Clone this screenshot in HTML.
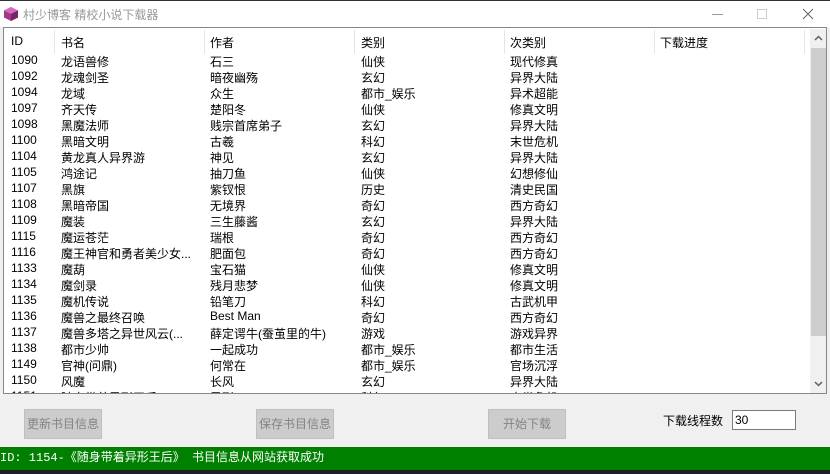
<!DOCTYPE html>
<html><head><meta charset="utf-8"><style>
*{margin:0;padding:0;box-sizing:border-box}
body{width:830px;height:474px;background:#f0f0f0;position:relative;overflow:hidden;font-family:"Liberation Sans","Noto Sans CJK SC","WenQuanYi Zen Hei",sans-serif;font-size:12px;color:#000}
.title{position:absolute;left:0;top:0;width:830px;height:27px;background:#fff;border-top:1px solid #333}
.title .t{position:absolute;left:23px;top:5px;color:#999;font-size:12px}
.list{position:absolute;left:3px;top:27px;width:824px;height:367px;background:#fff;border:1px solid #828790;overflow:hidden}
.c{position:absolute;white-space:nowrap}
.sep{position:absolute;top:2px;width:1px;height:24px;background:#e5e5e5}
.sb{position:absolute;left:806px;top:1px;width:17px;height:364px;background:#f0f0f0}
.thumb{position:absolute;left:1px;top:19px;width:15px;height:288px;background:#cdcdcd}
.btn{position:absolute;top:409px;width:78px;height:30px;background:#ccc;border:1px solid #bfbfbf;color:#838383;text-align:center;line-height:28px;font-size:12px}
.status{position:absolute;left:0;top:447px;width:830px;height:23px;background:#008000;color:#fff;font-family:"Liberation Mono","Noto Sans CJK SC",monospace;font-size:12px;line-height:23px;padding-left:0}
.bot{position:absolute;left:0;top:470px;width:830px;height:4px;background:#1f1f1f}
</style></head><body>
<div class="title">
<svg style="position:absolute;left:3px;top:5px" width="16" height="16" viewBox="0 0 16 16"><path d="M8 1L15 4.5V11.5L8 15L1 11.5V4.5Z" fill="#a23a8c"/><path d="M8 1L15 4.5L8 8L1 4.5Z" fill="#d46bbd"/><path d="M8 8V15L15 11.5V4.5Z" fill="#7a2368"/></svg>
<span class="t">村少博客 精校小说下载器</span>
<div style="position:absolute;left:712px;top:13px;width:11px;height:1px;background:#999"></div>
<div style="position:absolute;left:757px;top:8px;width:10px;height:10px;border:1px solid #ccc"></div>
<svg style="position:absolute;left:802px;top:7px" width="12" height="12"><path d="M1 1L11 11M11 1L1 11" stroke="#666" stroke-width="1"/></svg>
</div>
<div class="list">
<div class="c" style="left:7px;top:6px">ID</div>
<div class="c" style="left:57px;top:6px">书名</div>
<div class="c" style="left:206px;top:6px">作者</div>
<div class="c" style="left:357px;top:6px">类别</div>
<div class="c" style="left:506px;top:6px">次类别</div>
<div class="c" style="left:656px;top:6px">下载进度</div>
<div class="sep" style="left:50px"></div><div class="sep" style="left:200px"></div><div class="sep" style="left:350px"></div><div class="sep" style="left:500px"></div><div class="sep" style="left:650px"></div><div class="sep" style="left:800px"></div>
<div id="rows"></div>
<div class="sb"><svg style="position:absolute;left:4px;top:6px" width="9" height="6"><path d="M1 5L4.5 1.5L8 5" stroke="#606060" stroke-width="1.5" fill="none"/></svg><div class="thumb"></div><svg style="position:absolute;left:4px;top:352px" width="9" height="6"><path d="M1 1L4.5 4.5L8 1" stroke="#606060" stroke-width="1.5" fill="none"/></svg></div>
</div>
<div class="btn" style="left:24px">更新书目信息</div>
<div class="btn" style="left:256px">保存书目信息</div>
<div class="btn" style="left:488px">开始下载</div>
<div class="c" style="left:663px;top:412px">下载线程数</div>
<div style="position:absolute;left:732px;top:410px;width:64px;height:20px;background:#fff;border:1px solid #7a7a7a;padding-left:2px;line-height:18px">30</div>
<div class="status">ID: 1154-《随身带着异形王后》 书目信息从网站获取成功</div>
<div class="bot"></div>
<script>
var d=[["1090","龙语兽修","石三","仙侠","现代修真"],["1092","龙魂剑圣","暗夜幽殇","玄幻","异界大陆"],["1094","龙域","众生","都市_娱乐","异术超能"],["1097","齐天传","楚阳冬","仙侠","修真文明"],["1098","黑魔法师","贱宗首席弟子","玄幻","异界大陆"],["1100","黑暗文明","古羲","科幻","末世危机"],["1104","黄龙真人异界游","神见","玄幻","异界大陆"],["1105","鸿途记","抽刀鱼","仙侠","幻想修仙"],["1107","黑旗","紫钗恨","历史","清史民国"],["1108","黑暗帝国","无境界","奇幻","西方奇幻"],["1109","魔装","三生藤酱","玄幻","异界大陆"],["1115","魔运苍茫","瑞根","奇幻","西方奇幻"],["1116","魔王神官和勇者美少女...","肥面包","奇幻","西方奇幻"],["1133","魔葫","宝石猫","仙侠","修真文明"],["1134","魔剑录","残月悲梦","仙侠","修真文明"],["1135","魔机传说","铅笔刀","科幻","古武机甲"],["1136","魔兽之最终召唤","Best Man","奇幻","西方奇幻"],["1137","魔兽多塔之异世风云(...","薛定谔牛(蚕茧里的牛)","游戏","游戏异界"],["1138","都市少帅","一起成功","都市_娱乐","都市生活"],["1149","官神(问鼎)","何常在","都市_娱乐","官场沉浮"],["1150","风魔","长风","玄幻","异界大陆"],["1151","随身带着异形王后","异形","科幻","末世危机"]];
var h="",x=[7,57,206,357,506];
d.forEach(function(r,i){var y=25+i*16;r.forEach(function(v,j){h+='<div class="c" style="left:'+x[j]+'px;top:'+y+'px">'+v+'</div>'})});
document.getElementById("rows").innerHTML=h;
</script>
</body></html>
